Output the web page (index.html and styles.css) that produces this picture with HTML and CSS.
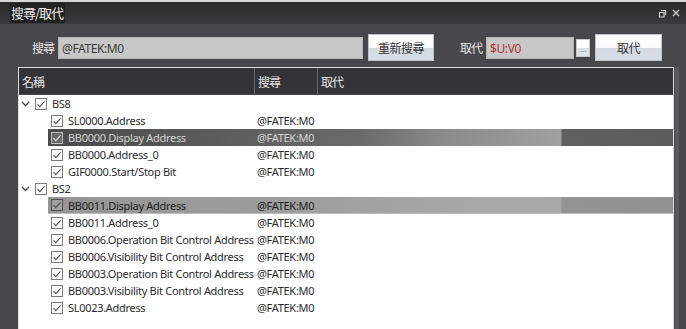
FILE: index.html
```html
<!DOCTYPE html>
<html>
<head>
<meta charset="utf-8">
<link rel="stylesheet" href="styles.css">
</head>
<body>
<div class="window">
  <div class="titlebar">
    <span class="title">搜尋/取代</span>
    <div class="win-icons">
      <svg class="ico" width="9" height="9" viewBox="0 0 9 9"><path d="M3 1.5h4.5v4.5M1.5 3.5h4.5v4.5h-4.5z" fill="none" stroke="#d0d0d0" stroke-width="1.2"/></svg>
      <svg class="ico" width="8" height="8" viewBox="0 0 8 8"><path d="M1 1l6 6M7 1l-6 6" stroke="#d0d0d0" stroke-width="1.3"/></svg>
    </div>
  </div>

  <div class="search-row">
    <span class="lbl lbl-search">搜尋</span>
    <div class="field field-search">@FATEK:M0</div>
    <button class="btn btn-research">重新搜尋</button>
    <span class="lbl lbl-replace">取代</span>
    <div class="field field-replace">$U:V0</div>
    <button class="btn-dots">...</button>
    <button class="btn btn-replace">取代</button>
  </div>

  <div class="table-area">
    <div class="table">
      <div class="thead">
        <div class="th th-name">名稱</div>
        <div class="th th-search">搜尋</div>
        <div class="th th-replace">取代</div>
      </div>
      <div class="tbody">
        <div class="row group">
          <div class="name"><svg class="chev" width="9" height="6" viewBox="0 0 9 6"><path d="M1 1l3.5 3.5L8 1" fill="none" stroke="#444" stroke-width="1.3"/></svg><span class="cb"><svg width="12" height="12" viewBox="0 0 12 12"><path d="M2.5 6.2l2.3 2.4 4.8-5.2" fill="none" stroke="#555" stroke-width="1.1"/></svg></span><span class="txt">BS8</span></div>
          <div class="val"></div>
        </div>
        <div class="row child">
          <div class="name"><span class="cb"><svg width="12" height="12" viewBox="0 0 12 12"><path d="M2.5 6.2l2.3 2.4 4.8-5.2" fill="none" stroke="#555" stroke-width="1.1"/></svg></span><span class="txt">SL0000.Address</span></div>
          <div class="val">@FATEK:M0</div>
        </div>
        <div class="row child sel-dark">
          <div class="name"><span class="cb"><svg width="12" height="12" viewBox="0 0 12 12"><path d="M2.5 6.2l2.3 2.4 4.8-5.2" fill="none" stroke="#555" stroke-width="1.1"/></svg></span><span class="txt">BB0000.Display Address</span></div>
          <div class="val">@FATEK:M0</div>
        </div>
        <div class="row child">
          <div class="name"><span class="cb"><svg width="12" height="12" viewBox="0 0 12 12"><path d="M2.5 6.2l2.3 2.4 4.8-5.2" fill="none" stroke="#555" stroke-width="1.1"/></svg></span><span class="txt">BB0000.Address_0</span></div>
          <div class="val">@FATEK:M0</div>
        </div>
        <div class="row child">
          <div class="name"><span class="cb"><svg width="12" height="12" viewBox="0 0 12 12"><path d="M2.5 6.2l2.3 2.4 4.8-5.2" fill="none" stroke="#555" stroke-width="1.1"/></svg></span><span class="txt">GIF0000.Start/Stop Bit</span></div>
          <div class="val">@FATEK:M0</div>
        </div>
        <div class="row group">
          <div class="name"><svg class="chev" width="9" height="6" viewBox="0 0 9 6"><path d="M1 1l3.5 3.5L8 1" fill="none" stroke="#444" stroke-width="1.3"/></svg><span class="cb"><svg width="12" height="12" viewBox="0 0 12 12"><path d="M2.5 6.2l2.3 2.4 4.8-5.2" fill="none" stroke="#555" stroke-width="1.1"/></svg></span><span class="txt">BS2</span></div>
          <div class="val"></div>
        </div>
        <div class="row child sel-light">
          <div class="name"><span class="cb"><svg width="12" height="12" viewBox="0 0 12 12"><path d="M2.5 6.2l2.3 2.4 4.8-5.2" fill="none" stroke="#555" stroke-width="1.1"/></svg></span><span class="txt">BB0011.Display Address</span></div>
          <div class="val">@FATEK:M0</div>
        </div>
        <div class="row child">
          <div class="name"><span class="cb"><svg width="12" height="12" viewBox="0 0 12 12"><path d="M2.5 6.2l2.3 2.4 4.8-5.2" fill="none" stroke="#555" stroke-width="1.1"/></svg></span><span class="txt">BB0011.Address_0</span></div>
          <div class="val">@FATEK:M0</div>
        </div>
        <div class="row child">
          <div class="name"><span class="cb"><svg width="12" height="12" viewBox="0 0 12 12"><path d="M2.5 6.2l2.3 2.4 4.8-5.2" fill="none" stroke="#555" stroke-width="1.1"/></svg></span><span class="txt">BB0006.Operation Bit Control Address</span></div>
          <div class="val">@FATEK:M0</div>
        </div>
        <div class="row child">
          <div class="name"><span class="cb"><svg width="12" height="12" viewBox="0 0 12 12"><path d="M2.5 6.2l2.3 2.4 4.8-5.2" fill="none" stroke="#555" stroke-width="1.1"/></svg></span><span class="txt">BB0006.Visibility Bit Control Address</span></div>
          <div class="val">@FATEK:M0</div>
        </div>
        <div class="row child">
          <div class="name"><span class="cb"><svg width="12" height="12" viewBox="0 0 12 12"><path d="M2.5 6.2l2.3 2.4 4.8-5.2" fill="none" stroke="#555" stroke-width="1.1"/></svg></span><span class="txt">BB0003.Operation Bit Control Address</span></div>
          <div class="val">@FATEK:M0</div>
        </div>
        <div class="row child">
          <div class="name"><span class="cb"><svg width="12" height="12" viewBox="0 0 12 12"><path d="M2.5 6.2l2.3 2.4 4.8-5.2" fill="none" stroke="#555" stroke-width="1.1"/></svg></span><span class="txt">BB0003.Visibility Bit Control Address</span></div>
          <div class="val">@FATEK:M0</div>
        </div>
        <div class="row child">
          <div class="name"><span class="cb"><svg width="12" height="12" viewBox="0 0 12 12"><path d="M2.5 6.2l2.3 2.4 4.8-5.2" fill="none" stroke="#555" stroke-width="1.1"/></svg></span><span class="txt">SL0023.Address</span></div>
          <div class="val">@FATEK:M0</div>
        </div>
      </div>
    </div>
    <div class="strip"></div>
  </div>
</div>
</body>
</html>
```

FILE: styles.css
```css
* { box-sizing: border-box; }
html, body { margin: 0; padding: 0; }
body {
  width: 686px;
  height: 329px;
  overflow: hidden;
  background: #48474c;
  font-family: "Noto Sans", "Noto Sans CJK TC", sans-serif;
}
.window {
  border-top: 2px solid #d6d6d6;
  height: 329px;
  display: flex;
  flex-direction: column;
}
.titlebar {
  height: 22px;
  flex: none;
  display: flex;
  align-items: center;
  justify-content: space-between;
  background: linear-gradient(#2b2b2b, #3a3a3c);
  padding: 0 6px 0 10px;
}
.title {
  font-family: "Noto Sans CJK TC", sans-serif;
  color: #ececec;
  font-size: 13px;
  letter-spacing: -1px;
  background: #222;
  padding: 0 2px 0 1px;
  line-height: 20px;
}
.win-icons { display: flex; gap: 5px; align-items: center; }
.ico { display: block; }

.search-row {
  flex: none;
  display: flex;
  align-items: center;
  height: 27px;
  margin-top: 10px;
  padding-left: 32px;
}
.lbl {
  font-family: "Noto Sans CJK TC", sans-serif;
  color: #e6e6e6;
  font-size: 12px;
  letter-spacing: -1px;
}
.field {
  height: 22px;
  line-height: 22px;
  background: #c8c8c8;
  border: 1px solid #b4b4b4;
  font-size: 12px;
  letter-spacing: -0.4px;
  padding-left: 3px;
}
.field-search { width: 305px; margin-left: 4px; color: #3a3a3a; }
.field-replace { width: 88px; margin-left: 4px; color: #b2303f; }
.btn {
  height: 27px;
  border: 1px solid #bfc3c9;
  background: linear-gradient(#fefefe 0%, #fbfbfb 50%, #d4d9e2 51%, #d8dde5 100%);
  font-family: "Noto Sans CJK TC", sans-serif;
  font-size: 12px;
  color: #333;
  padding: 0;
  letter-spacing: -0.5px;
}
.btn-research { width: 66px; margin-left: 5px; }
.lbl-replace { margin-left: 26px; }
.btn-dots {
  width: 14px;
  height: 18px;
  margin-left: 2px;
  align-self: flex-end;
  margin-bottom: 4px;
  padding: 0;
  border: 1px solid #c7c7c7;
  background: linear-gradient(#ffffff 50%, #dde1e8 51%);
  font-size: 8px;
  line-height: 20px;
  color: #555;
}
.btn-replace { width: 67px; margin-left: 5px; }

.table-area {
  flex: 1;
  display: flex;
  margin-top: 6px;
  padding-left: 18px;
  min-height: 0;
}
.table {
  width: 656px;
  border: 1px solid #dcdcdc;
  border-bottom: none;
  display: flex;
  flex-direction: column;
  background: #ffffff;
}
.strip {
  width: 4px;
  margin-left: 1px;
  background: #5a595e;
}
.thead {
  height: 27px;
  flex: none;
  display: flex;
  background: #343438;
  border-bottom: 1px solid #4a4a4e;
}
.th {
  font-family: "Noto Sans CJK TC", sans-serif;
  font-size: 12px;
  letter-spacing: -1px;
  color: #e4e4e4;
  line-height: 27px;
  padding-left: 3px;
}
.th-name { width: 236px; border-right: 1px solid #6a6a6e; }
.th-search { width: 63px; border-right: 1px solid #6a6a6e; }
.th-replace { flex: 1; }

.tbody { flex: 1; }
.row {
  height: 17px;
  display: flex;
  align-items: center;
  font-size: 11px;
  letter-spacing: -0.3px;
  color: #2c2c2c;
}
.row.child { margin-left: 29px; }
.row.group .name { width: 236px; padding-left: 2px; }
.row.child .name { width: 207px; padding-left: 3px; }
.name { display: flex; align-items: center; height: 17px; }
.chev { margin-right: 5px; }
.cb {
  width: 12px;
  height: 12px;
  border: 1px solid #7a7a7a;
  background: #fff;
  display: inline-flex;
  margin-right: 5px;
}
.cb svg { margin: -1px; }
.txt { white-space: nowrap; }
.val { padding-left: 2px; white-space: nowrap; }

.sel-dark {
  background: linear-gradient(to right, #4a4a4a 0%, #5e5e5e 30%, #6a6a6a 50%, #8a8a8a 63%, #a0a0a0 82%, #606060 82.3%, #5c5c5c 100%);
  color: #d4d4d4;
}
.sel-dark .cb { border-color: #bdbdbd; background: #6a6a6a; }
.sel-dark .cb path { stroke: #e0e0e0; }
.sel-light {
  background: linear-gradient(to right, #959595 0%, #9e9e9e 40%, #a9a9a9 70%, #a8a8a8 82%, #949494 82.3%, #929292 100%);
  border-bottom: 1px solid #bdbdbd;
  color: #1e1e1e;
}
.sel-light .cb { border-color: #555; background: #a0a0a0; }
```
